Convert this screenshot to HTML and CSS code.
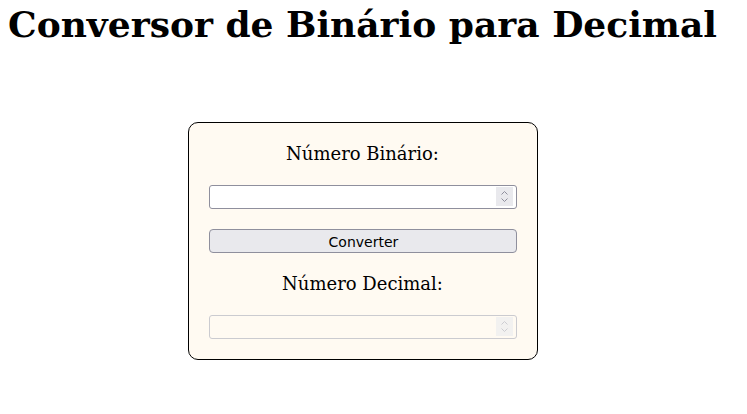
FILE: index.html
```html
<!DOCTYPE html>
<html lang="pt">
<head>
<meta charset="utf-8">
<title>Conversor de Binário para Decimal</title>
<link rel="stylesheet" href="styles.css">
</head>
<body>
<div class="page">
  <h1 class="title">Conversor de Binário para Decimal</h1>
  <div class="card">
    <label class="label" for="bin">Número Binário:</label>
    <div class="field-wrap">
      <input class="field" type="number" id="bin">
      <span class="spin" aria-hidden="true">
        <svg width="9" height="13" viewBox="0 0 9 13"><path d="M1.5 4.5 L4.5 1.5 L7.5 4.5 M1.5 8.5 L4.5 11.5 L7.5 8.5" fill="none" stroke="currentColor" stroke-width="1"/></svg>
      </span>
    </div>
    <button class="btn" type="button">Converter</button>
    <label class="label" for="dec">Número Decimal:</label>
    <div class="field-wrap field-wrap--disabled">
      <input class="field" type="number" id="dec" disabled>
      <span class="spin" aria-hidden="true">
        <svg width="9" height="13" viewBox="0 0 9 13"><path d="M1.5 4.5 L4.5 1.5 L7.5 4.5 M1.5 8.5 L4.5 11.5 L7.5 8.5" fill="none" stroke="currentColor" stroke-width="1"/></svg>
      </span>
    </div>
  </div>
</div>
</body>
</html>
```
FILE: styles.css
```css
body {
  margin: 8px;
  font-family: "DejaVu Serif", serif;
}
.page {
  display: inline-flex;
  flex-direction: column;
  align-items: center;
}
.title {
  margin: 0;
  font-size: 36px;
  line-height: 33px;
  font-weight: bold;
}
.card {
  margin: 81px 0 0 2px;
  width: 350px;
  box-sizing: border-box;
  padding: 20px;
  border: 1px solid #000;
  border-radius: 10px;
  background: #fffaf2;
  display: flex;
  flex-direction: column;
  align-items: center;
}
.label {
  font-size: 18px;
  line-height: 22px;
  margin: 0 2px 20px 0;
  color: #000;
}
.field-wrap {
  position: relative;
  width: 100%;
  height: 24px;
  margin-bottom: 20px;
}
.field-wrap:last-child {
  margin-bottom: 0;
}
.field {
  display: block;
  width: 100%;
  height: 24px;
  box-sizing: border-box;
  margin: 0;
  padding: 1px 4px;
  border: 1px solid #8f8f9d;
  border-radius: 3px;
  background: #fff;
  font-family: "DejaVu Sans", sans-serif;
  font-size: 13.33px;
  -moz-appearance: textfield;
}
.field::-webkit-inner-spin-button,
.field::-webkit-outer-spin-button {
  -webkit-appearance: none;
  margin: 0;
}
.field:disabled {
  background: transparent;
  border-color: #cbcbd0;
}
.spin {
  position: absolute;
  top: 2px;
  right: 4px;
  width: 17px;
  height: 19px;
  background: #e9e9ed;
  color: #8f8f9d;
  display: flex;
  align-items: center;
  justify-content: center;
  pointer-events: none;
}
.field-wrap--disabled .spin {
  background: #f2f1f0;
  color: #cdcdd2;
}
.btn {
  width: 100%;
  margin: 0 0 20px;
  height: 24px;
  padding: 2px 8px 0;
  border: 1px solid #8f8f9d;
  border-radius: 4px;
  background: #e9e9ed;
  color: #000;
  font-family: "DejaVu Sans", sans-serif;
  font-size: 14px;
}
```
